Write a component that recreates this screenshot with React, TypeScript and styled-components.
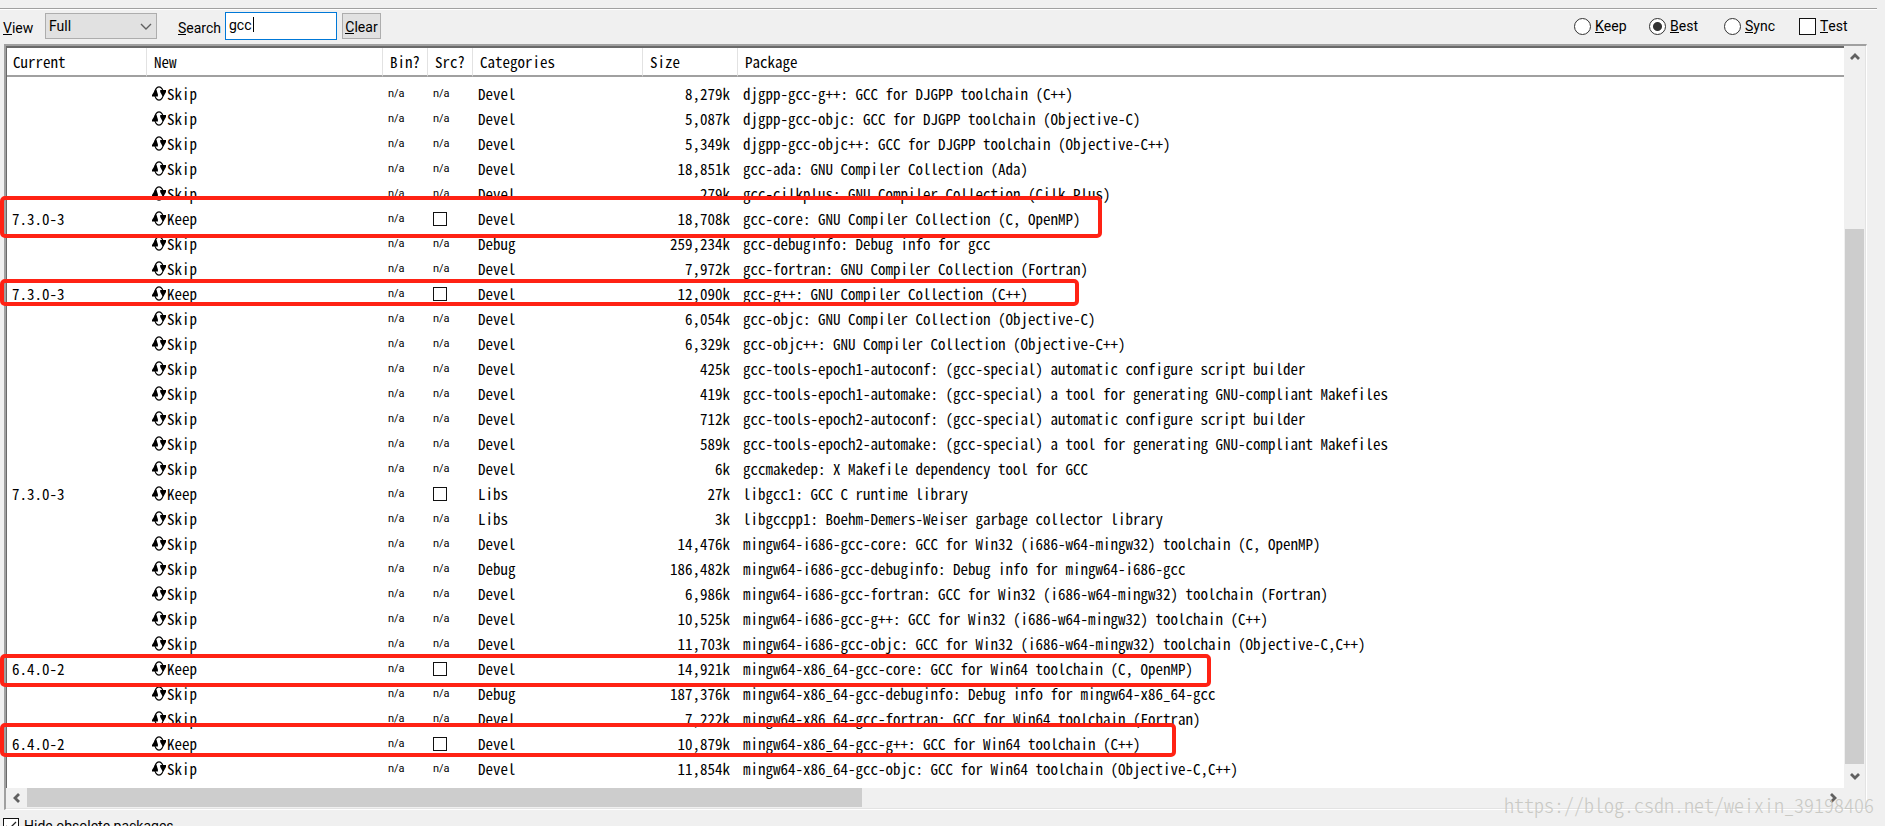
import React from 'react';
import styled, { createGlobalStyle, css } from 'styled-components';

const face = '#f0f0f0';
const thumb = '#cdcdcd';
const arrow = '#606060';

const GlobalStyle = createGlobalStyle`
  * { box-sizing: border-box; }
  body {
    margin: 0;
    background: ${face};
    color: #000;
    font: 14px/20px Roboto, "Liberation Sans", sans-serif;
  }
`;

const gridFont = css`
  font-family: "Noto Sans CJK SC", "Liberation Mono", monospace;
  font-feature-settings: "hwid" 1;
  font-variant-ligatures: none;
`;

const Page = styled.main`
  position: relative;
  height: 100vh;
  min-height: 400px;
  overflow: hidden;
  padding-top: 8px;
`;

const Divider = styled.hr`
  height: 2px;
  margin: 0 8px 0 0;
  border: 0;
  border-top: 1px solid #a0a0a0;
  border-bottom: 1px solid #fff;
`;

const Toolbar = styled.form`
  display: flex;
  align-items: center;
  height: 34px;
  padding: 0 11px 2px 3px;
`;

const FieldLabel = styled.label<{ $width: number }>`
  flex: none;
  width: ${(p) => p.$width}px;
  padding-top: 3px;
`;

const Underlined = styled.span`
  display: inline-block;
  border-bottom: 1px solid #000;
  line-height: 12px;
`;

const ViewField = styled.div`
  position: relative;
  width: 112px;
  margin-right: 21px;

  svg {
    position: absolute;
    right: 5px;
    top: 10px;
    pointer-events: none;
  }
`;

const ViewSelect = styled.select`
  display: block;
  appearance: none;
  width: 100%;
  height: 26px;
  padding: 0 3px;
  border: 1px solid #adadad;
  border-radius: 0;
  background: #e1e1e1;
  color: #000;
  font: inherit;
`;

const SearchField = styled.div`
  position: relative;
  width: 112px;
  margin-right: 5px;
`;

const SearchInput = styled.input`
  display: block;
  width: 100%;
  height: 28px;
  padding: 0 3px 2px;
  border: 1px solid #0078d7;
  background: #fff;
  color: #000;
  font: inherit;
  outline: none;
`;

const Caret = styled.span`
  position: absolute;
  left: 28px;
  top: 5px;
  width: 1px;
  height: 15px;
  background: #000;
`;

const ClearButton = styled.button`
  height: 26px;
  width: 39px;
  padding: 2px 0 0;
  border: 1px solid #adadad;
  background: #e1e1e1;
  color: #000;
  font: inherit;
`;

const Options = styled.fieldset`
  display: flex;
  margin: 0 0 0 auto;
  padding: 0;
  border: 0;
`;

const Option = styled.label`
  display: flex;
  align-items: center;
  gap: 4px;
  width: 75px;
`;

const Radio = styled.input`
  appearance: none;
  width: 17px;
  height: 17px;
  margin: 0;
  border: 1px solid #333;
  border-radius: 50%;
  background: #fff;

  &:checked {
    background: radial-gradient(circle, #333 0 4px, #fff 5px);
  }
`;

const Check = styled.input<{ $size: number }>`
  appearance: none;
  display: block;
  flex: none;
  width: ${(p) => p.$size}px;
  height: ${(p) => p.$size}px;
  margin: 0;
  border: 1px solid #111;
  background: #fff;
`;

const Frame = styled.section`
  margin: 0 18px 0 4px;
  border: 2px solid #a0a0a0;
  border-right: 1px solid #fff;
  border-bottom: 1px solid #fff;
`;

const FrameInner = styled.div`
  display: grid;
  grid-template-columns: 1fr 21px;
  grid-template-rows: auto 20px;
  border-right: 1px solid #e3e3e3;
  border-bottom: 1px solid #e3e3e3;
`;

const ListArea = styled.div`
  padding-bottom: 7px;
  border-left: 1px solid #696969;
  border-top: 2px solid #696969;
  background: #fff;
  overflow: hidden;
`;

const Table = styled.table`
  ${gridFont}
  width: 100%;
  table-layout: fixed;
  border-collapse: separate;
  border-spacing: 0;
  font-size: 15px;
  line-height: 25px;
  white-space: pre;
`;

const Col = styled.col<{ $width?: number }>`
  width: ${(p) => (p.$width ? `${p.$width}px` : 'auto')};
`;

const Th = styled.th`
  height: 29px;
  padding: 0 6px;
  border-right: 1px solid #e2e2e2;
  border-bottom: 2px solid #a0a0a0;
  font-weight: 400;
  text-align: left;

  &:nth-child(n + 2) { padding-left: 7px; }
  &:last-child { border-right: 0; }
`;

const Body = styled.tbody`
  &::before {
    content: '';
    display: table-row;
    height: 4px;
  }
`;

const Td = styled.td<{ $right?: boolean }>`
  height: 25px;
  padding: 0 5px;
  text-align: ${(p) => (p.$right ? 'right' : 'left')};

  ${(p) => p.$right && 'padding-right: 8px;'}
`;

const Action = styled.span`
  display: flex;
  align-items: center;
  gap: 1px;
`;

const NotAvailable = styled.span`
  display: block;
  padding-top: 1px;
  font: 11px/24px Roboto, "Liberation Sans", sans-serif;
`;

const VBar = styled.div`
  display: flex;
  flex-direction: column;
  padding: 0 1px;
  background: ${face};
`;

const HBar = styled.div`
  display: flex;
  padding: 0 0 1px;
  background: ${face};
`;

const BarButton = styled.button<{ $w: number; $h: number }>`
  display: flex;
  flex: none;
  align-items: center;
  justify-content: center;
  width: ${(p) => p.$w}px;
  height: ${(p) => p.$h}px;
  padding: 0;
  border: 0;
  background: none;
`;

const Space = styled.div<{ $grow: number }>`
  flex: ${(p) => p.$grow} 1 0;
`;

const Thumb = styled(Space)`
  background: ${thumb};
`;

const Footer = styled.label`
  display: flex;
  align-items: center;
  gap: 5px;
  padding: 7px 3px 0;
  line-height: 18px;
`;

const CheckMarkBox = styled.span`
  position: relative;
  display: block;

  svg {
    position: absolute;
    left: 2px;
    top: 3px;
    pointer-events: none;
  }
`;

const Marker = styled.div<{ $top: number; $width: number; $height: number }>`
  position: absolute;
  left: 0;
  top: ${(p) => p.$top}px;
  width: ${(p) => p.$width}px;
  height: ${(p) => p.$height}px;
  border: 4px solid #ff2214;
  border-radius: 5px;
  pointer-events: none;
`;

const Watermark = styled.div`
  ${gridFont}
  position: absolute;
  right: 11px;
  top: 791px;
  color: #c9c9c4;
  font-size: 20px;
  font-weight: 300;
  line-height: 28px;
  pointer-events: none;
`;

type Pkg = { current?: string; category?: string; size: string; name: string };

const packages: Pkg[] = [
  { size: '8,279k', name: 'djgpp-gcc-g++: GCC for DJGPP toolchain (C++)' },
  { size: '5,087k', name: 'djgpp-gcc-objc: GCC for DJGPP toolchain (Objective-C)' },
  { size: '5,349k', name: 'djgpp-gcc-objc++: GCC for DJGPP toolchain (Objective-C++)' },
  { size: '18,851k', name: 'gcc-ada: GNU Compiler Collection (Ada)' },
  { size: '279k', name: 'gcc-cilkplus: GNU Compiler Collection (Cilk Plus)' },
  { current: '7.3.0-3', size: '18,708k', name: 'gcc-core: GNU Compiler Collection (C, OpenMP)' },
  { category: 'Debug', size: '259,234k', name: 'gcc-debuginfo: Debug info for gcc' },
  { size: '7,972k', name: 'gcc-fortran: GNU Compiler Collection (Fortran)' },
  { current: '7.3.0-3', size: '12,090k', name: 'gcc-g++: GNU Compiler Collection (C++)' },
  { size: '6,054k', name: 'gcc-objc: GNU Compiler Collection (Objective-C)' },
  { size: '6,329k', name: 'gcc-objc++: GNU Compiler Collection (Objective-C++)' },
  { size: '425k', name: 'gcc-tools-epoch1-autoconf: (gcc-special) automatic configure script builder' },
  { size: '419k', name: 'gcc-tools-epoch1-automake: (gcc-special) a tool for generating GNU-compliant Makefiles' },
  { size: '712k', name: 'gcc-tools-epoch2-autoconf: (gcc-special) automatic configure script builder' },
  { size: '589k', name: 'gcc-tools-epoch2-automake: (gcc-special) a tool for generating GNU-compliant Makefiles' },
  { size: '6k', name: 'gccmakedep: X Makefile dependency tool for GCC' },
  { current: '7.3.0-3', category: 'Libs', size: '27k', name: 'libgcc1: GCC C runtime library' },
  { category: 'Libs', size: '3k', name: 'libgccpp1: Boehm-Demers-Weiser garbage collector library' },
  { size: '14,476k', name: 'mingw64-i686-gcc-core: GCC for Win32 (i686-w64-mingw32) toolchain (C, OpenMP)' },
  { category: 'Debug', size: '186,482k', name: 'mingw64-i686-gcc-debuginfo: Debug info for mingw64-i686-gcc' },
  { size: '6,986k', name: 'mingw64-i686-gcc-fortran: GCC for Win32 (i686-w64-mingw32) toolchain (Fortran)' },
  { size: '10,525k', name: 'mingw64-i686-gcc-g++: GCC for Win32 (i686-w64-mingw32) toolchain (C++)' },
  { size: '11,703k', name: 'mingw64-i686-gcc-objc: GCC for Win32 (i686-w64-mingw32) toolchain (Objective-C,C++)' },
  { current: '6.4.0-2', size: '14,921k', name: 'mingw64-x86_64-gcc-core: GCC for Win64 toolchain (C, OpenMP)' },
  { category: 'Debug', size: '187,376k', name: 'mingw64-x86_64-gcc-debuginfo: Debug info for mingw64-x86_64-gcc' },
  { size: '7,222k', name: 'mingw64-x86_64-gcc-fortran: GCC for Win64 toolchain (Fortran)' },
  { current: '6.4.0-2', size: '10,879k', name: 'mingw64-x86_64-gcc-g++: GCC for Win64 toolchain (C++)' },
  { size: '11,854k', name: 'mingw64-x86_64-gcc-objc: GCC for Win64 toolchain (Objective-C,C++)' },
];

const columns = [
  { title: 'Current', width: 140 },
  { title: 'New', width: 236 },
  { title: 'Bin?', width: 45 },
  { title: 'Src?', width: 45 },
  { title: 'Categories', width: 170 },
  { title: 'Size', width: 95 },
  { title: 'Package' },
];

const markers = [
  { top: 196, width: 1102, height: 42 },
  { top: 279, width: 1079, height: 27 },
  { top: 654, width: 1211, height: 33 },
  { top: 723, width: 1176, height: 34 },
];

const CycleIcon = () => (
  <svg width="14" height="15" viewBox="0 0 14 15" aria-hidden="true">
    <ellipse cx="7" cy="7.5" rx="4.4" ry="6.6" fill="none" stroke="#000" strokeWidth="1.1" />
    <path d="M3.4 3.6 H4.4 L5.9 8.6 V10.6 H0 V9 Z" fill="#000" />
    <path d="M8.2 4 H14 V6 L11.6 10.2 H10.6 L8.2 6 Z" fill="#000" />
  </svg>
);

const turns = { up: 0, right: 90, down: 180, left: 270 };

const ArrowIcon = ({ dir }: { dir: keyof typeof turns }) => (
  <svg width="10" height="10" viewBox="0 0 10 10" aria-hidden="true">
    <path
      d="M1 7 L5 3 L9 7"
      fill="none"
      stroke={arrow}
      strokeWidth="2.8"
      transform={`rotate(${turns[dir]} 5 5)`}
    />
  </svg>
);

const Mnemonic = ({ text }: { text: string }) => (
  <span>
    <Underlined>{text[0]}</Underlined>
    {text.slice(1)}
  </span>
);

const PackageRow = ({ pkg }: { pkg: Pkg }) => (
  <tr>
    <Td>{pkg.current}</Td>
    <Td>
      <Action>
        <CycleIcon />
        {pkg.current ? 'Keep' : 'Skip'}
      </Action>
    </Td>
    <Td><NotAvailable>n/a</NotAvailable></Td>
    <Td>
      {pkg.current ? (
        <Check type="checkbox" $size={14} aria-label={`Source of ${pkg.name}`} />
      ) : (
        <NotAvailable>n/a</NotAvailable>
      )}
    </Td>
    <Td>{pkg.category ?? 'Devel'}</Td>
    <Td $right>{pkg.size}</Td>
    <Td>{pkg.name}</Td>
  </tr>
);

export default function App() {
  return (
    <Page>
      <GlobalStyle />
      <Divider />
      <Toolbar onSubmit={(e) => e.preventDefault()}>
        <FieldLabel htmlFor="view" $width={42}><Mnemonic text="View" /></FieldLabel>
        <ViewField>
          <ViewSelect id="view" defaultValue="Full">
            <option>Full</option>
            <option>Category</option>
            <option>Pending</option>
          </ViewSelect>
          <svg width="12" height="8" viewBox="0 0 12 8" aria-hidden="true">
            <path d="M1 1 L6 6 L11 1" fill="none" stroke="#606060" strokeWidth="1.4" />
          </svg>
        </ViewField>
        <FieldLabel htmlFor="search" $width={47}><Mnemonic text="Search" /></FieldLabel>
        <SearchField>
          <SearchInput id="search" type="text" defaultValue="gcc" />
          <Caret />
        </SearchField>
        <ClearButton type="reset"><Mnemonic text="Clear" /></ClearButton>
        <Options>
          {['Keep', 'Best', 'Sync'].map((name) => (
            <Option key={name}>
              <Radio type="radio" name="mode" defaultChecked={name === 'Best'} />
              <Mnemonic text={name} />
            </Option>
          ))}
          <Option>
            <Check type="checkbox" $size={17} />
            <Mnemonic text="Test" />
          </Option>
        </Options>
      </Toolbar>

      <Frame>
        <FrameInner>
          <ListArea>
            <Table>
              <colgroup>
                {columns.map((c) => <Col key={c.title} $width={c.width} />)}
              </colgroup>
              <thead>
                <tr>{columns.map((c) => <Th key={c.title} scope="col">{c.title}</Th>)}</tr>
              </thead>
              <Body>
                {packages.map((p) => <PackageRow key={p.name} pkg={p} />)}
              </Body>
            </Table>
          </ListArea>
          <VBar>
            <BarButton type="button" $w={19} $h={22} aria-label="Scroll up"><ArrowIcon dir="up" /></BarButton>
            <Space $grow={161} />
            <Thumb $grow={535} />
            <BarButton type="button" $w={19} $h={24} aria-label="Scroll down"><ArrowIcon dir="down" /></BarButton>
          </VBar>
          <HBar>
            <BarButton type="button" $w={21} $h={19} aria-label="Scroll left"><ArrowIcon dir="left" /></BarButton>
            <Thumb $grow={835} />
            <Space $grow={960} />
            <BarButton type="button" $w={22} $h={19} aria-label="Scroll right"><ArrowIcon dir="right" /></BarButton>
          </HBar>
        </FrameInner>
      </Frame>

      <Footer>
        <CheckMarkBox>
          <Check type="checkbox" $size={16} defaultChecked />
          <svg width="12" height="10" viewBox="0 0 12 10" aria-hidden="true">
            <path d="M1 5 L4 8 L11 1" fill="none" stroke="#222" strokeWidth="1.3" />
          </svg>
        </CheckMarkBox>
        Hide obsolete packages
      </Footer>

      {markers.map((m) => (
        <Marker key={m.top} $top={m.top} $width={m.width} $height={m.height} />
      ))}
      <Watermark>https://blog.csdn.net/weixin_39198406</Watermark>
    </Page>
  );
}
